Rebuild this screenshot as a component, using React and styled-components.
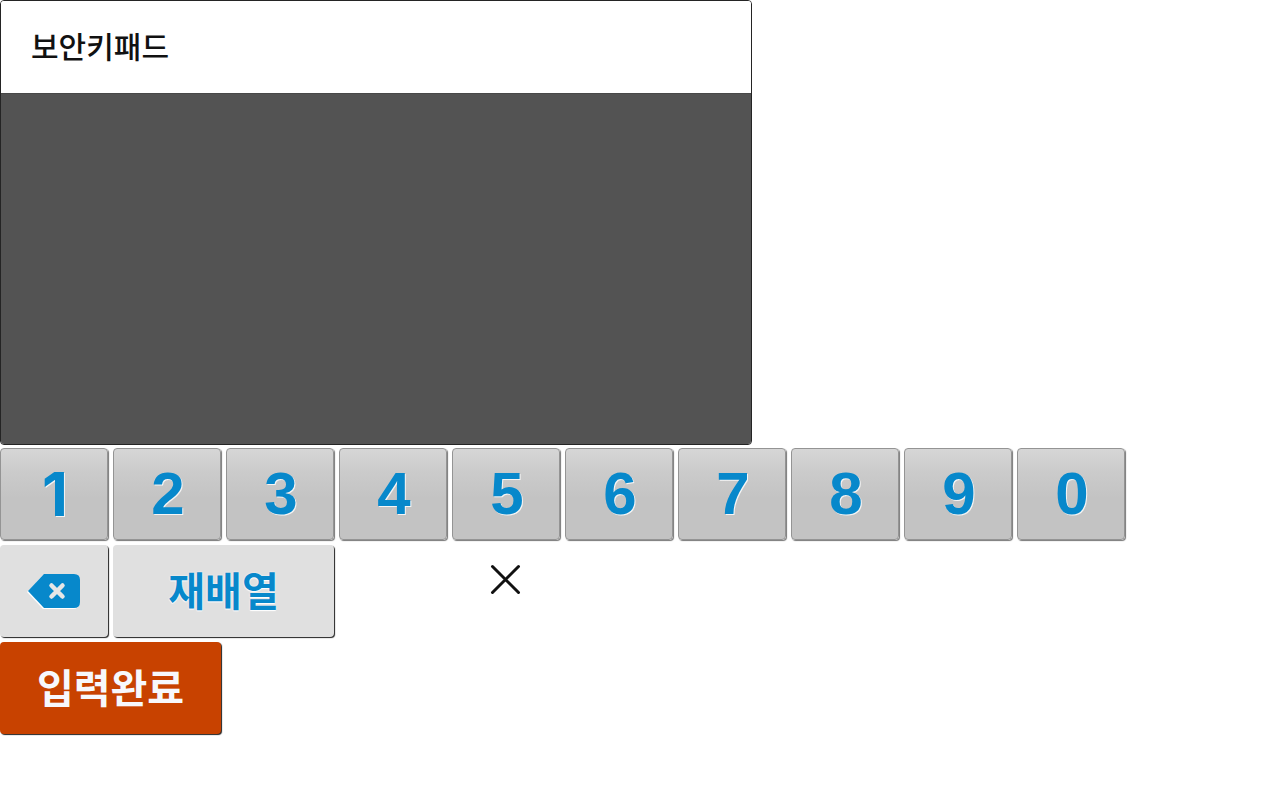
import React from "react";
import styled, { createGlobalStyle, css } from "styled-components";

const GlobalStyle = createGlobalStyle`
  *, *::before, *::after { box-sizing: border-box; }
  body {
    margin: 0;
    background: #fff;
    font-family: "Liberation Sans", "Noto Sans CJK KR", sans-serif;
  }
`;

const Keypad = styled.main`
  display: flex;
  flex-direction: column;
  gap: 3px;
  padding-bottom: 8px;
`;

const Panel = styled.section`
  display: flex;
  flex-direction: column;
  width: 100%;
  max-width: 752px;
  border: 1px solid #242424;
  border-radius: 4px;
  overflow: hidden;
`;

const PanelHeader = styled.header`
  padding: 22px 30px 26px;
  background: #fff;
`;

const Title = styled.h1`
  margin: 0;
  color: #111;
  font-family: "Noto Sans CJK KR", sans-serif;
  font-size: 30px;
  font-weight: 500;
  line-height: 44px;
`;

const PanelBody = styled.div`
  min-height: 351px;
  background: #535353;
  border-top: 1px solid #484848;
`;

const Rows = styled.div`
  display: flex;
  flex-direction: column;
  gap: 5px;
`;

const Row = styled.div`
  display: flex;
  flex-wrap: wrap;
  gap: 5px;
`;

const tones = {
  digit: css`
    padding: 0 0 0 2px;
    color: #0788cb;
    background: linear-gradient(#d6d6d6, #cbcbcb 25%, #c3c3c3 55%, #c3c3c3);
    border: 1px solid #949494;
    box-shadow: 1px 1px 1px #777;
    text-shadow: 1px 1px 0 #f5f5f5;
  `,
  tool: css`
    padding: 0 0 4px;
    color: #0788cb;
    background: #e0e0e0;
    border: 0;
    box-shadow: 1px 1px 1px #222;
    text-shadow: 0 1px 1px #fff, 0 0 2px #fff;
  `,
  submit: css`
    padding: 0 0 4px;
    color: #f7f8fc;
    background: #c84200;
    border: 0;
    box-shadow: 1px 1px 1px #222;
  `,
};

const Key = styled.button`
  display: flex;
  align-items: center;
  justify-content: center;
  width: ${(p) => (p.$wide ? 221 : 108)}px;
  height: 92px;
  border-radius: 4px;
  font-family: ${(p) => p.$face || '"Noto Sans CJK KR", sans-serif'};
  font-size: ${(p) => (p.$tone === "digit" ? 60 : 40)}px;
  font-weight: 700;
  line-height: 60px;
  cursor: pointer;
  ${(p) => tones[p.$tone]}
`;

const BackspaceKey = styled(Key)`
  padding: 2px 0 0;
`;

const CloseButton = styled.button`
  display: flex;
  align-items: center;
  justify-content: center;
  width: 69px;
  height: 69px;
  margin-left: 132px;
  padding: 0;
  border: 0;
  background: none;
  color: #111;
  cursor: pointer;
`;

const digits = ["1", "2", "3", "4", "5", "6", "7", "8", "9", "0"];

const faceOf = (digit) =>
  digit === "1" ? "Inter, sans-serif" : '"Liberation Sans", Arial, sans-serif';

function BackspaceIcon() {
  const body = "M16 0H46Q52 0 52 6V28Q52 34 46 34H16L0 17Z";
  return (
    <svg width="54" height="36" viewBox="-1 0 54 36" aria-hidden="true">
      <path d={body} transform="translate(-1 1)" fill="#fff" />
      <path d={body} fill="#0788cb" />
      <path
        d="M23.5 11.5L34.5 22.5M34.5 11.5L23.5 22.5"
        fill="none"
        stroke="#e6e6e6"
        strokeWidth="4.5"
        strokeLinecap="round"
      />
    </svg>
  );
}

function CloseIcon() {
  return (
    <svg width="31" height="31" viewBox="0 0 31 31" aria-hidden="true">
      <path
        d="M2.5 2.5L28.5 28.5M28.5 2.5L2.5 28.5"
        fill="none"
        stroke="currentColor"
        strokeWidth="3"
        strokeLinecap="round"
      />
    </svg>
  );
}

export default function App() {
  return (
    <>
      <GlobalStyle />
      <Keypad>
        <Panel>
          <PanelHeader>
            <Title>보안키패드</Title>
          </PanelHeader>
          <PanelBody />
        </Panel>
        <Rows>
          <Row>
            {digits.map((digit) => (
              <Key key={digit} type="button" $tone="digit" $face={faceOf(digit)}>
                {digit}
              </Key>
            ))}
          </Row>
          <Row>
            <BackspaceKey type="button" $tone="tool" aria-label="삭제">
              <BackspaceIcon />
            </BackspaceKey>
            <Key type="button" $tone="tool" $wide>
              재배열
            </Key>
            <CloseButton type="button" aria-label="닫기">
              <CloseIcon />
            </CloseButton>
          </Row>
          <Row>
            <Key type="button" $tone="submit" $wide>
              입력완료
            </Key>
          </Row>
        </Rows>
      </Keypad>
    </>
  );
}
